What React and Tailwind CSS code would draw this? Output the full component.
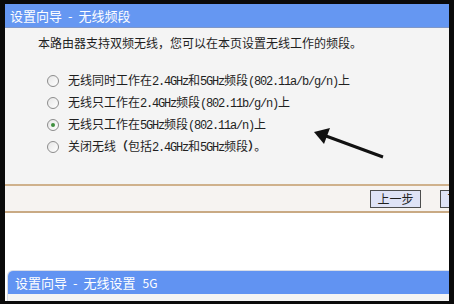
import React from "react";

const M = ({ children }) => (
  <span className="text-[12px] tracking-[-1.2px] [font-family:'Liberation_Mono',monospace]">{children}</span>
);

const Radio = ({ checked }) => (
  <div className="w-[12px] h-[12px] rounded-full border border-[#8c8c8c] bg-[linear-gradient(135deg,#e6e6e6,#ffffff)] flex items-center justify-center shrink-0">
    {checked && <div className="w-[4px] h-[4px] rounded-full bg-[#3f8f3f]" />}
  </div>
);

const Row = ({ checked, children }) => (
  <div className="flex items-center h-[22px]">
    <Radio checked={checked} />
    <div className="ml-[9px] whitespace-nowrap leading-none">{children}</div>
  </div>
);

export default function App() {
  return (
    <div className="w-[454px] h-[304px] bg-[#0a0a0a] pt-[4px] pl-[5px] pr-[5px] pb-[3px] text-[12px] text-[#1f1f1f] [font-family:'Noto_Sans_CJK_SC','Noto_Sans',sans-serif]">
      <div className="w-full h-full bg-white overflow-hidden flex flex-col">
        <div className="h-[24px] shrink-0 bg-[#6597f2] border-b border-[#7f97c8] text-white text-[13px] flex items-center pl-[5px] whitespace-nowrap">
          <span>设置向导</span>
          <span className="mx-[6px]">-</span>
          <span>无线频段</span>
        </div>
        <div className="h-[156px] shrink-0 bg-[#f4f4f4] pt-[8px] pl-[33px]">
          <div className="leading-[14px] whitespace-nowrap">本路由器支持双频无线，您可以在本页设置无线工作的频段。</div>
          <div className="mt-[20px] pl-[9px] flex flex-col">
            <Row>无线同时工作在<M>2.4GHz</M>和<M>5GHz</M>频段<M>(802.11a/b/g/n)</M>上</Row>
            <Row>无线只工作在<M>2.4GHz</M>频段<M>(802.11b/g/n)</M>上</Row>
            <Row checked>无线只工作在<M>5GHz</M>频段<M>(802.11a/n)</M>上</Row>
            <Row>关闭无线<span className="font-bold">（</span>包括<M>2.4GHz</M>和<M>5GHz</M>频段<span className="font-bold">）</span>。</Row>
          </div>
        </div>
        <div className="h-[2px] shrink-0 bg-[#cfb18c]" />
        <div className="h-[25px] shrink-0 bg-[#f6f3f1] flex items-center gap-[19px] pl-[365px] whitespace-nowrap">
          <button className="w-[51px] h-[18px] shrink-0 bg-[#dfe3f6] border border-[#4d4d4d] text-[12px] leading-none flex items-center justify-center">上一步</button>
          <button className="w-[51px] h-[18px] shrink-0 bg-[#dfe3f6] border border-[#4d4d4d] text-[12px] leading-none flex items-center justify-center">下一步</button>
        </div>
        <div className="h-[2px] shrink-0 bg-[#c9aa84]" />
        <div className="h-[57px] shrink-0 bg-white" />
        <div className="flex-1 ml-[2px] border-l border-t border-[#d8dde8] rounded-tl-[6px] overflow-hidden flex flex-col">
          <div className="h-[23px] shrink-0 bg-[#6193f2] text-white text-[13px] flex items-center pl-[7px] whitespace-nowrap">
            <span>设置向导</span>
            <span className="mx-[6px]">-</span>
            <span>无线设置</span>
            <span className="ml-[7px] text-[12px]">5G</span>
          </div>
          <div className="flex-1 bg-[#f4f4f4]" />
        </div>
      </div>
      <svg className="absolute left-0 top-0 pointer-events-none" width="454" height="304">
        <line x1="383" y1="157" x2="326" y2="136" stroke="#111" strokeWidth="3" />
        <polygon points="314,132 330,128 324,144" fill="#111" />
      </svg>
    </div>
  );
}
